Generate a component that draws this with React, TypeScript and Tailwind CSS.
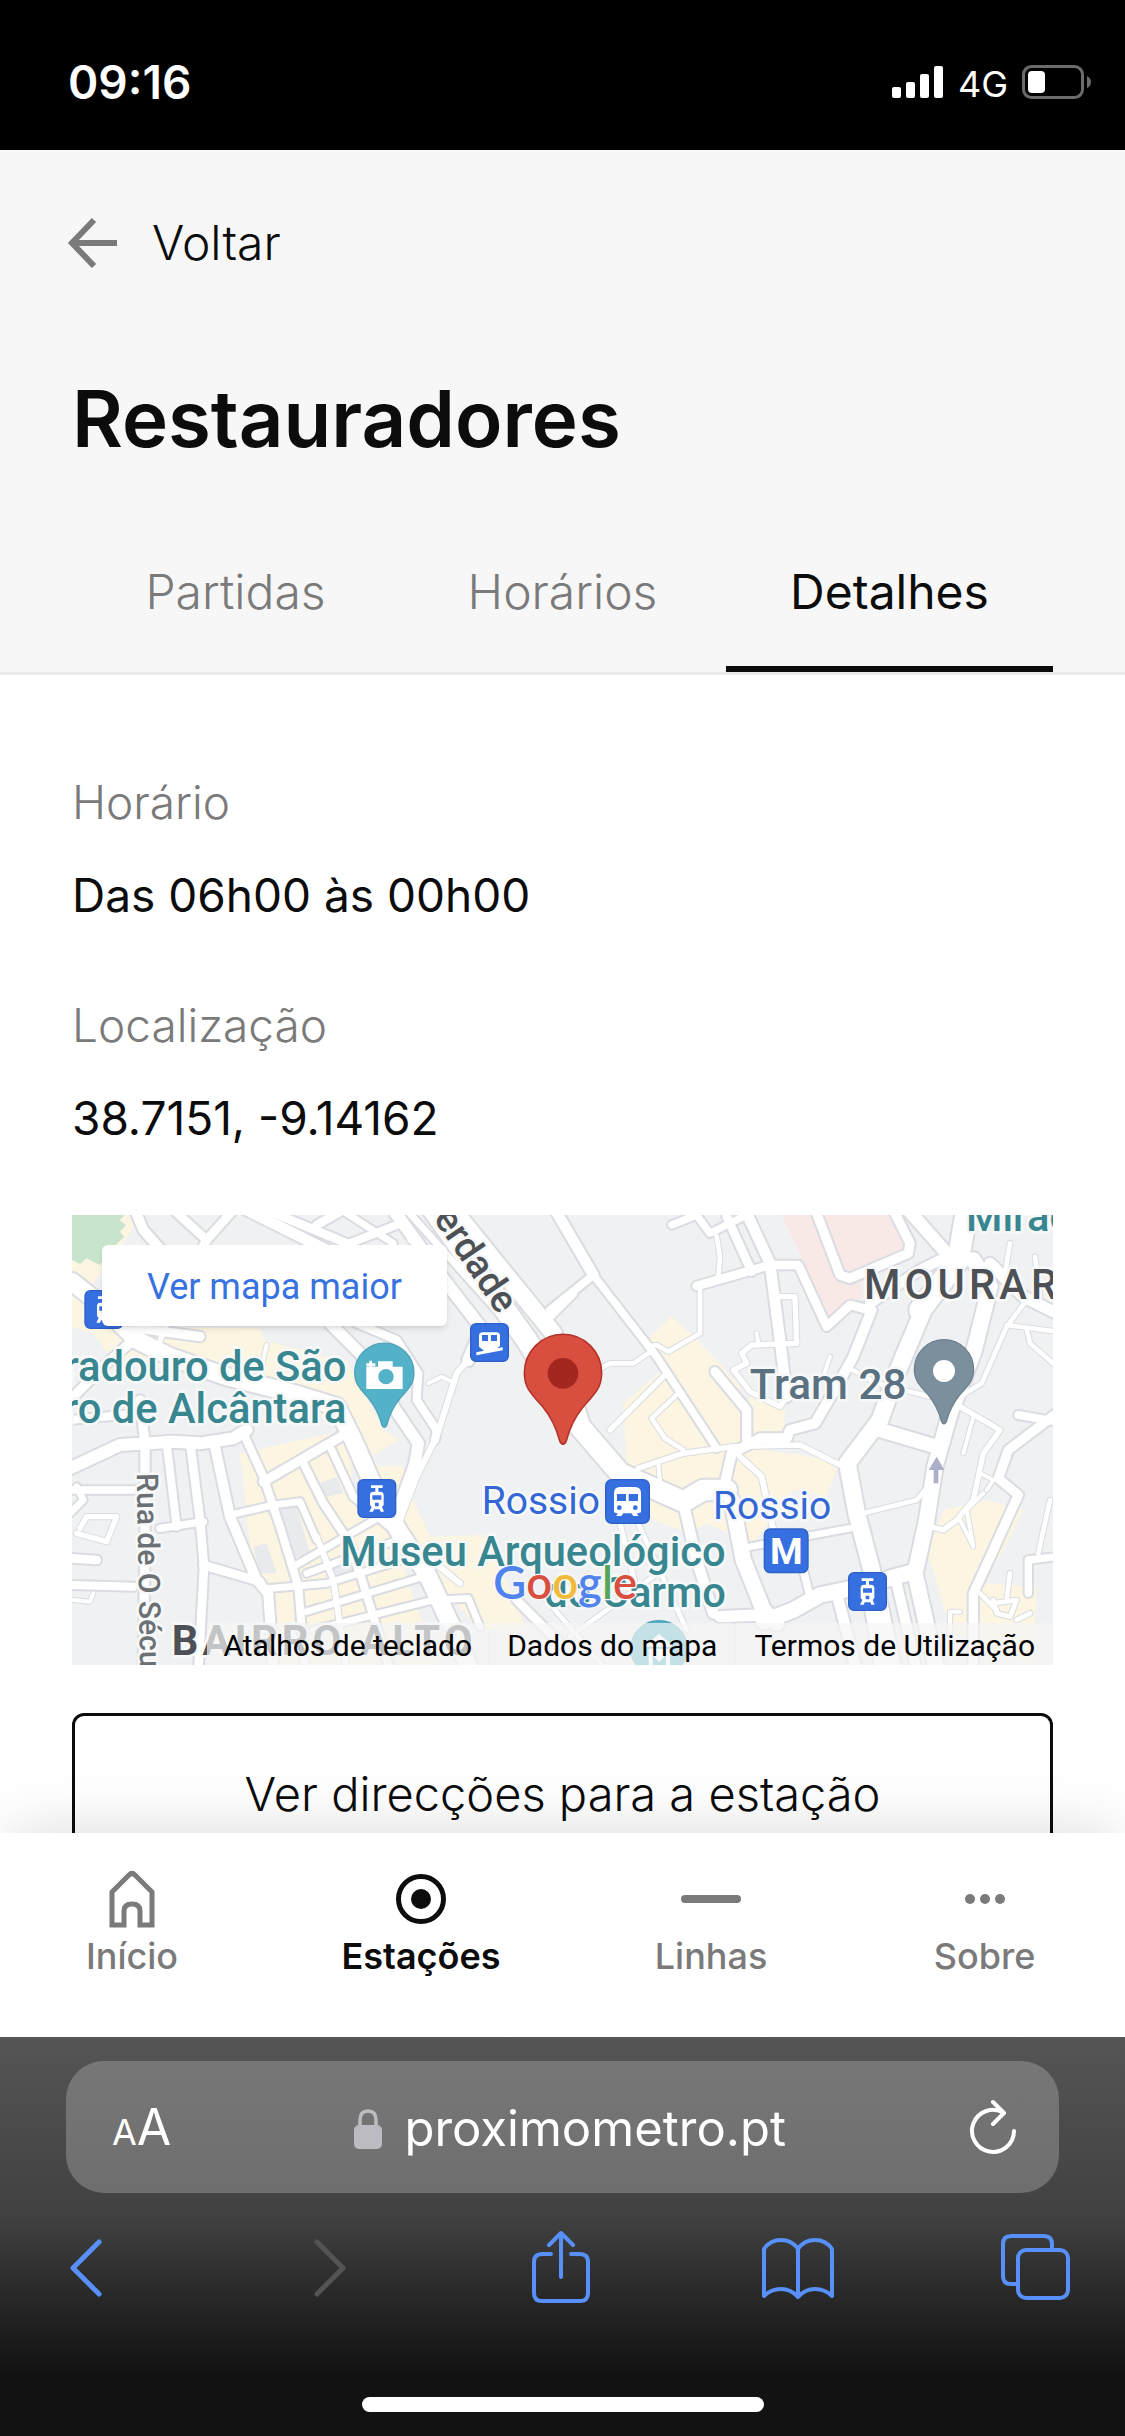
import React from 'react';

type Road = [string, number];

// Map geometry is kept in two tiles of 1500 units, drawn side by side
const westRoads: Road[] = [
  ['M225 30 L250 90 L330 180', 30],
  ['M330 20 L440 120 L520 30', 26],
  ['M440 120 L410 170', 26],
  ['M540 20 L800 150', 32],
  ['M620 30 L860 130', 26],
  ['M770 75 L850 30', 26],
  ['M870 130 L1010 75', 24],
  ['M860 40 L1000 130', 20],
  ['M1000 30 L1160 250 L1265 385 L1225 480', 36],
  ['M1040 30 L1390 420', 20],
  ['M1120 30 L1400 420 L1560 680', 62],
  ['M1180 30 L1480 400', 50],
  ['M1450 370 L1540 280', 24],
  ['M1050 120 L1120 170', 16],
  ['M810 370 L980 540 L1000 620 L1075 730 L1065 790 L1015 930', 34],
  ['M890 370 L1010 420 L1075 520 L1070 600 L1130 690 L1125 720', 24],
  ['M1225 480 L1190 520 L1130 710 L1070 830 L1020 960', 18],
  ['M1105 550 L1145 530 L1175 545', 12],
  ['M36 245 L130 320 L230 420 L330 470 L500 530 L700 580 L830 620 L880 720 L950 880 L1020 1000 L1100 1120 L1180 1290 L1230 1410', 52],
  ['M240 385 L420 410', 28],
  ['M320 370 L290 450', 16],
  ['M620 435 L600 520', 12],
  ['M230 410 L130 500 L30 600', 28],
  ['M30 660 L240 640', 24],
  ['M30 805 L180 735 L340 725 L420 730 L520 715 L560 690', 36],
  ['M240 600 L255 730 L255 1000 L250 1410', 28],
  ['M30 870 L230 870', 22],
  ['M30 940 L70 900 L50 860', 20],
  ['M30 1155 L220 1160', 24],
  ['M60 985 L80 950 L170 950 L140 1025 L50 1000', 16],
  ['M30 1075 L110 1080', 26],
  ['M100 1180 L90 1205 L40 1200', 12],
  ['M320 730 L350 980', 24],
  ['M300 985 L430 965', 22],
  ['M392 740 L420 960 L432 1100 L415 1410', 26],
  ['M465 740 L510 950 L590 1140 L625 1180 L640 1410', 30],
  ['M550 700 L610 830 L660 980 L715 1160 L735 1410', 24],
  ['M610 845 L860 700', 28],
  ['M430 1095 L600 1145', 26],
  ['M510 945 L640 915 L720 905 L770 1020', 20],
  ['M730 790 L790 910 L850 1000 L900 1120 L990 1410', 24],
  ['M815 750 L880 890 L1000 990', 22],
  ['M770 1010 L820 1140 L860 1410', 18],
  ['M700 1100 L960 950', 20],
  ['M740 1120 L1040 1010', 20],
  ['M630 1165 L800 1150 L1060 1070', 20],
  ['M740 1235 L1090 1130', 20],
  ['M760 1290 L1120 1200 L1225 1195 L1260 1280', 20],
  ['M1090 1060 L1200 1150', 18],
  ['M1370 1200 L1500 1330', 26],
];

const eastRoads: Road[] = [
  ['M-20 20 L100 225', 32],
  ['M100 225 L-30 330', 24],
  ['M100 225 L290 470 L470 745', 22],
  ['M335 75 L410 45 L450 100 L570 40', 22],
  ['M470 110 L480 170 L475 230', 14],
  ['M500 50 L575 215', 26],
  ['M560 40 L630 190 L660 420 L680 590', 32],
  ['M410 258 L630 195 L715 195 L800 380 L870 315 L930 330', 26],
  ['M420 260 L420 400 L325 455 L290 435 L260 440', 14],
  ['M770 40 L840 225 L870 235 L1045 160 L1050 130 L1005 40', 28],
  ['M1045 30 L1160 160', 38],
  ['M1200 150 L1080 210 L930 310', 30],
  ['M1220 30 L1195 180 L1080 330', 64],
  ['M1200 180 L1090 330 L1010 520 L960 660 L862 790 L890 940 L935 1110 L1000 1410', 50],
  ['M1240 180 L1290 260 L1240 460 L1170 640 L1125 800 L1100 960 L1065 1120 L1130 1410', 46],
  ['M960 690 L1130 740', 42],
  ['M935 330 L880 470 L830 560 L765 670 L690 690 L680 715 L600 715 L515 760 L490 870', 30],
  ['M465 515 L560 630 L560 720', 28],
  ['M680 590 L660 620 L570 575 L520 510 L560 490 L545 460 L575 435 L710 430 L705 290 L660 290', 16],
  ['M590 400 L595 430', 12],
  ['M810 470 L790 530', 12],
  ['M860 500 L950 550 L1110 590', 14],
  ['M30 590 L60 680 L180 820 L370 905 L430 870 L500 870', 62],
  ['M320 520 L150 690', 16],
  ['M120 505 L150 490 L220 490 L280 450', 14],
  ['M360 575 L275 655 L315 715 L370 750', 14],
  ['M235 805 L370 760 L520 740 L720 735 L840 795', 16],
  ['M295 790 L300 850', 12],
  ['M540 770 L605 830 L640 990', 18],
  ['M370 910 L410 1080 L460 1240', 32],
  ['M515 900 L550 1080 L610 1230 L650 1270', 46],
  ['M480 1250 L600 1245', 34],
  ['M610 1265 L700 1230 L780 1185 L900 1160 L1060 1115', 46],
  ['M570 1040 L870 985', 20],
  ['M730 1110 L750 1190', 22],
  ['M910 940 L1070 900 L1095 870', 14],
  ['M180 970 L230 1170', 16],
  ['M230 960 L380 1290', 14],
  ['M30 1310 L280 1130', 14],
  ['M-40 1200 L130 1400', 14],
  ['M830 1180 L890 1410', 32],
  ['M920 1180 L960 1410', 26],
  ['M1010 1150 L1070 1410', 30],
  ['M1200 620 L1320 690 L1270 760 L1240 900 L1190 960 L1150 990 L1110 980', 16],
  ['M1240 650 L1210 760', 12],
  ['M1260 820 L1300 840 L1280 870', 12],
  ['M1200 960 L1240 1040 L1220 930 L1270 880', 12],
  ['M1490 640 L1345 750 L1315 835 L1375 885 L1300 1050 L1240 1180 L1240 1410', 28],
  ['M1375 645 L1490 665', 24],
  ['M1490 340 L1390 290 L1290 190', 34],
  ['M1400 300 L1340 380 L1265 550 L1200 590', 14],
  ['M1340 375 L1490 395', 14],
  ['M1400 385 L1410 430 L1490 500', 14],
  ['M1350 130 L1335 220', 14],
  ['M1425 170 L1440 290', 14],
  ['M1405 1180 L1405 1080 L1490 1070', 22],
  ['M1470 900 L1435 1060', 14],
  ['M1170 1300 L1170 1235 L1200 1235', 12],
  ['M1300 1210 L1370 1200 L1350 1250 L1310 1240 L1300 1200 M1260 1180 L1310 1230 M1350 1120 L1340 1200 M1370 1260 L1410 1240', 14],
];

const labelHalo = {
  stroke: '#f7f8f8',
  strokeWidth: 16,
  strokeLinejoin: 'round' as const,
  paintOrder: 'stroke',
};

const Roads = ({ roads, casing }: { roads: Road[]; casing?: boolean }) => (
  <g fill="none" strokeLinejoin="round" strokeLinecap="round" stroke={casing ? '#dadce2' : '#ffffff'}>
    {roads.map(([d, width]) => (
      <path key={d} d={d} strokeWidth={casing ? width + (width > 18 ? 12 : 6) : width} />
    ))}
  </g>
);

const Pin = ({ x, y, r, fill, edge }: { x: number; y: number; r: number; fill: string; edge: string }) => (
  <path
    transform={`translate(${x} ${y}) scale(${r / 100})`}
    d="M0 184 Q-6 184 -9 174 C-18 140 -30 115 -52 88 C-82 54 -100 38 -100 0 A100 100 0 0 1 100 0 C100 38 82 54 52 88 C30 115 18 140 9 174 Q6 184 0 184Z"
    fill={fill}
    stroke={edge}
    strokeWidth="4"
  />
);

const TramIcon = ({ x, y }: { x: number; y: number }) => (
  <g transform={`translate(${x} ${y})`}>
    <rect x="2" y="2" width="113" height="113" rx="16" fill="#3670e0" stroke="#2d60c6" strokeWidth="4" />
    <path d="M41 19 H76 V27 H63 V38 H68 Q79 38 79 48 V78 L74 84 L80 98 H70 L67 91 H50 L47 98 H36 L43 84 L38 78 V48 Q38 38 49 38 H54 V27 H41Z" fill="#fff" />
    <path d="M45 49 H72 V62 H45Z M53 71 H64 V82 H53Z" fill="#3670e0" />
  </g>
);

const StationMap = () => (
  <svg
    className="absolute inset-0 h-full w-full font-[Roboto,sans-serif]"
    viewBox="0 0 2943 1350"
    preserveAspectRatio="xMidYMid slice"
    aria-label="Mapa da estação"
  >
    <rect width="2943" height="1350" fill="#f0f1f3" />
    <g transform="translate(-36 -45)">
      <path d="M36 180 L150 130 L170 30 L225 30 L220 80 L180 150 L90 260 L36 220Z M36 290 L200 380 L600 385 L610 420 L830 480 L860 480 L970 690 L1020 720 L930 770 L960 800 L1025 795 L1060 900 L1110 1010 L1270 1005 L1320 1100 L1400 1290 L1260 1290 L1000 1000 L870 680 L560 560 L150 470 L100 400 L36 380Z" fill="#fcf5e1" />
      <path d="M540 760 L860 690 L880 860 L1010 1040 L1130 1395 L630 1395 L620 1170 L570 1040Z" fill="#fcf5e1" />
      <path d="M620 930 L710 920 L750 1060 L690 1080Z M780 850 L830 830 L850 880 L800 890Z M790 1100 L870 1080 L880 1120 L800 1140Z M580 1040 L620 1030 L650 1120 L600 1120Z" fill="#e8eaed" />
      <path d="M36 45 H195 L178 60 L198 75 L180 95 L193 110 L160 140 L120 195 L80 175 L60 192 L36 180Z" fill="#c8e4cd" />
    </g>
    <g transform="translate(1464 -45)">
      <path d="M265 415 L335 350 L390 400 L480 490 L540 560 L550 740 L820 780 L830 810 L800 890 L700 870 L580 1030 L440 970 L390 1000 L280 960 L250 900 L380 900 L200 800 L190 610 L310 510Z M570 590 L675 630 L670 700 L560 700Z M1150 930 L1280 900 L1390 930 L1330 1050 L1270 1150 L1430 1160 L1420 1395 L1170 1290 L1120 1110 L1100 1060Z" fill="#fcf5e1" />
      <path d="M665 45 H1015 L1040 150 L900 250 L910 290 L800 350 L720 160Z" fill="#f8e8e6" />
    </g>
    <g transform="translate(-36 -45)"><Roads roads={westRoads} casing /></g>
    <g transform="translate(1464 -45)"><Roads roads={eastRoads} casing /></g>
    <g transform="translate(-36 -45)"><Roads roads={westRoads} /></g>
    <g transform="translate(1464 -45)"><Roads roads={eastRoads} /></g>

    {/* Place names */}
    <g transform="translate(-36 -45)" fontWeight="500">
      <text transform="translate(1315 346) rotate(56)" textAnchor="end" fontSize="114" fill="#4d5156" {...labelHalo}>Liberdade</text>
      <text transform="translate(230 820) rotate(89)" fontSize="90" fill="#6b7075" {...labelHalo}>Rua de O Século</text>
      <text x="335" y="1366" fontSize="125" fontWeight="700" className="tracking-widest" fill="#4d5156" {...labelHalo}>BAIRRO ALTO</text>
      <g fontSize="125" fill="#388790" {...labelHalo}>
        <text x="859" y="543" textAnchor="end">Miradouro de São</text>
        <text x="859" y="668" textAnchor="end">Pedro de Alcântara</text>
        <text x="1419" y="1097" textAnchor="middle">Museu Arqueológico</text>
        <text x="1998" y="1222" textAnchor="end">do Carmo</text>
        <text x="2718" y="94">Miradouro</text>
      </g>
      <g fontSize="117" fontWeight="400" fill="#3367d6" {...labelHalo}>
        <text x="1265" y="943">Rossio</text>
        <text x="1959" y="957">Rossio</text>
      </g>
      <text x="2069" y="597" fontSize="127" fill="#5a7181" {...labelHalo}>Tram 28</text>
      <text x="2412" y="296" fontSize="125" className="tracking-widest" fill="#4d5156" {...labelHalo}>MOURARIA</text>
    </g>

    {/* Transport stops */}
    <g transform="translate(-36 -45)">
      <TramIcon x={73} y={270} />
      <TramIcon x={892} y={837} />
      <TramIcon x={2364} y={1116} />
      <rect x="1232" y="371" width="113" height="113" rx="16" fill="#3670e0" stroke="#2d60c6" strokeWidth="4" />
      <path d="M1268 397 H1309 Q1320 397 1320 408 V437 L1312 445 L1328 442 V451 L1249 466 V457 L1272 452 L1257 440 V408 Q1257 397 1268 397Z" fill="#fff" />
      <path d="M1266 405 H1284 V423 H1266Z M1293 405 H1311 V423 H1293Z" fill="#3670e0" />
      <rect x="1637" y="839" width="131" height="131" rx="18" fill="#3670e0" stroke="#2d60c6" strokeWidth="4" />
      <path d="M1680 861 H1725 Q1743 861 1743 880 V937 L1730 941 L1736 948 H1720 L1714 940 H1690 L1684 948 H1668 L1674 941 L1662 937 V880 Q1662 861 1680 861Z" fill="#fff" />
      <path d="M1671 882 H1698 V903 H1671Z M1706 882 H1734 V903 H1706Z" fill="#3670e0" />
      <circle cx="1678" cy="923" r="7" fill="#3670e0" />
      <circle cx="1726" cy="923" r="7" fill="#3670e0" />
      <rect x="2113" y="987" width="131" height="131" rx="18" fill="#3670e0" stroke="#2d60c6" strokeWidth="4" />
      <text x="2179" y="1092" textAnchor="middle" fontSize="112" fontWeight="700" fill="#fff">M</text>
      <path d="M2630 770 L2606 810 H2621 V850 H2635 V810 H2653Z" fill="#abb0c8" />

      <Pin x={973} y={518} r={89} fill="#53b1c8" edge="#4a9fb4" />
      <path d="M919 500 H954 V484 H998 V500 H1028 V567 H919Z M928 482 H936 V490 H946 V499 H936 V509 H928 V499 H919 V490 H928Z" fill="#fff" />
      <circle cx="978" cy="530" r="23" fill="#53b1c8" />
      <Pin x={2652} y={508} r={89} fill="#7c8f9c" edge="#687f8c" />
      <circle cx="2652" cy="513" r="33" fill="#fff" />
      <Pin x={1509} y={519} r={116} fill="#d84f3f" edge="#b53228" />
      <circle cx="1509" cy="520" r="46" fill="#a3261f" />
      <Pin x={1797} y={1347} r={85} fill="#53b1c8" edge="#4a9fb4" />
      <path d="M1758 1334 L1797 1302 L1836 1334 V1340 H1758Z M1766 1346 H1830 V1400 H1818 V1364 L1798 1386 L1778 1364 V1400 H1766Z" fill="#fff" />

      <text x="1300" y="1198" fontFamily="Lato, sans-serif" fontSize="136" fontWeight="600" {...labelHalo} strokeWidth="8">
        <tspan fill="#5083ee">G</tspan>
        <tspan fill="#d84f3f">o</tspan>
        <tspan fill="#f1ba3b">o</tspan>
        <tspan fill="#5083ee">g</tspan>
        <tspan fill="#54a55b">l</tspan>
        <tspan fill="#d84f3f">e</tspan>
      </text>
    </g>
  </svg>
);

const StatusBar = () => (
  <div className="flex h-[150px] shrink-0 items-center justify-between bg-black pt-[14px] pr-[33px] pl-[68px] text-white">
    <span className="text-[46px] leading-none font-semibold">09:16</span>
    <div className="flex items-center gap-[14px]">
      <svg width="52" height="34" viewBox="0 0 52 34" fill="#fff" aria-hidden="true">
        <rect x="0" y="22" width="9" height="11" rx="2" />
        <rect x="14" y="17" width="9" height="16" rx="2" />
        <rect x="28" y="9" width="9" height="24" rx="2" />
        <rect x="42" y="1" width="9" height="32" rx="2" />
      </svg>
      <span className="pt-1 text-[36px] leading-none">4G</span>
      <svg width="70" height="34" viewBox="0 0 70 34" aria-hidden="true">
        <rect x="1.5" y="1.5" width="59" height="31" rx="8" fill="none" stroke="#6b6b6b" strokeWidth="3" />
        <rect x="6" y="6" width="17" height="22" rx="4" fill="#fff" />
        <path d="M65 11 Q69 13 69 17 T65 23Z" fill="#6b6b6b" />
      </svg>
    </div>
  </div>
);

const tabs = ['Partidas', 'Horários', 'Detalhes'];

const StationHeader = () => (
  <header className="shrink-0 border-b-[3px] border-[#eaeaea] bg-[#f7f7f7] px-[72px] pt-[57px]">
    <a href="#voltar" className="flex h-[72px] items-center gap-8 text-[48px] leading-[72px] font-light">
      <svg width="48" height="50" viewBox="0 0 48 50" fill="none" stroke="#7a7a7a" strokeWidth="6" className="overflow-visible" aria-hidden="true">
        <path d="M22 2 L0 25 L22 48 M0 25 H45" />
      </svg>
      Voltar
    </a>
    <h1 className="mt-[90px] text-[78px] leading-[100px] font-semibold">Restauradores</h1>
    <nav className="mt-[51px] grid grid-cols-3">
      {tabs.map((tab) => (
        <a
          key={tab}
          href={`#${tab.toLowerCase()}`}
          className={
            tab === 'Detalhes'
              ? 'border-b-6 border-[#0c0c0c] pt-9 pb-[38px] text-center text-[48px] leading-[72px]'
              : 'border-b-6 border-transparent pt-9 pb-[38px] text-center text-[48px] leading-[72px] font-light text-[#7a7a7a]'
          }
        >
          {tab}
        </a>
      ))}
    </nav>
  </header>
);

const details = [
  { label: 'Horário', value: 'Das 06h00 às 00h00' },
  { label: 'Localização', value: '38.7151, -9.14162' },
];

const StationDetails = () => (
  <main className="min-h-0 flex-1 overflow-hidden px-[72px] pt-[91px]">
    <dl>
      {details.map((item) => (
        <div key={item.label} className="mb-[58px] text-[46px] leading-[72px]">
          <dt className="mb-[21px] font-light text-[#7a7a7a]">{item.label}</dt>
          <dd>{item.value}</dd>
        </div>
      ))}
    </dl>

    <div className="relative mt-[61px] h-[450px] overflow-hidden font-[Roboto,sans-serif]">
      <StationMap />
      <a href="#mapa" className="absolute top-[30px] left-[30px] rounded-md bg-white px-[45px] pt-[3px] text-[36px] leading-[78px] text-[#3872e0] shadow-md">
        Ver mapa maior
      </a>
      <div className="absolute right-0 bottom-0 flex gap-[3px] text-[30px] leading-[38px] text-black">
        <button className="bg-[#f5f5f5]/70 px-4 pt-1">Atalhos de teclado</button>
        <button className="bg-[#f5f5f5]/70 px-4 pt-1">Dados do mapa</button>
        <a href="#termos" className="bg-[#f5f5f5]/70 px-[18px] pt-1">Termos de Utilização</a>
      </div>
    </div>

    <button className="mt-12 w-full rounded-xl border-[3px] border-[#0c0c0c] py-[42px] text-[47px] leading-[72px] font-light">
      Ver direcções para a estação
    </button>
  </main>
);

const BottomNav = () => (
  <nav className="relative grid h-[204px] shrink-0 grid-cols-[264fr_314fr_266fr_281fr] items-start bg-white pt-9 text-[36px] leading-[54px] font-medium text-[#7a7a7a] shadow-[0_-8px_60px_-10px_rgba(0,0,0,0.16)]">
    <a href="#inicio" className="flex flex-col items-center">
      <svg width="60" height="60" viewBox="0 0 60 60" fill="none" stroke="currentColor" strokeWidth="5" aria-hidden="true">
        <path d="M10 23 L27 6 Q30 3 33 6 L50 23 V56 H38 V42 Q38 35 30 35 T22 42 V56 H10Z" />
      </svg>
      Início
    </a>
    <a href="#estacoes" className="flex flex-col items-center font-semibold text-[#0c0c0c]">
      <svg width="60" height="60" viewBox="0 0 60 60" fill="none" stroke="currentColor" strokeWidth="5" aria-hidden="true">
        <circle cx="30" cy="30" r="22.5" />
        <circle cx="30" cy="30" r="10" fill="currentColor" stroke="none" />
      </svg>
      Estações
    </a>
    <a href="#linhas" className="flex flex-col items-center">
      <svg width="60" height="60" viewBox="0 0 60 60" fill="currentColor" aria-hidden="true">
        <rect x="0" y="26" width="60" height="8" rx="4" />
      </svg>
      Linhas
    </a>
    <a href="#sobre" className="flex flex-col items-center">
      <svg width="60" height="60" viewBox="0 0 60 60" fill="currentColor" aria-hidden="true">
        <circle cx="15" cy="30" r="5" />
        <circle cx="30" cy="30" r="5" />
        <circle cx="45" cy="30" r="5" />
      </svg>
      Sobre
    </a>
  </nav>
);

const BrowserBar = () => (
  <footer className="relative flex shrink-0 flex-col bg-linear-to-b from-[#555555] via-[#414141] via-45% to-[#121212] to-85% pt-6 pb-6">
    <div className="mx-[66px] flex h-[132px] items-center justify-between rounded-[38px] bg-linear-to-b from-[#777777] to-[#6e6e6e] pr-[42px] pl-[46px] text-white">
      <button className="flex items-baseline" aria-label="Opções de página">
        <span className="text-[36px] leading-none">A</span>
        <span className="text-[50px] leading-none">A</span>
      </button>
      <div className="flex items-center gap-[22px] pt-1 text-[49px] leading-[60px]">
        <svg width="28" height="40" viewBox="0 0 28 40" aria-hidden="true">
          <path d="M6 19 V11 Q6 2 14 2 T22 11 V19" fill="none" stroke="#bcbbc1" strokeWidth="3.5" />
          <rect x="0" y="16" width="28" height="24" rx="5" fill="#bcbbc1" />
        </svg>
        proximometro.pt
      </div>
      <button aria-label="Recarregar">
        <svg width="48" height="56" viewBox="0 0 48 56" fill="none" stroke="#fff" strokeWidth="4" strokeLinecap="round" strokeLinejoin="round" aria-hidden="true">
          <path d="M45 32 A21 21 0 1 1 35 14 M24 3 L35 14 L24 25" />
        </svg>
      </button>
    </div>

    <div className="mt-[30px] flex h-[88px] items-center justify-between pr-[53px] pl-[49px] text-[#5690f8]">
      <button className="flex w-[74px] justify-center" aria-label="Retroceder">
        <svg width="60" height="60" viewBox="0 0 60 60" fill="none" stroke="currentColor" strokeWidth="5" strokeLinecap="round" strokeLinejoin="round">
          <path d="M43 5 L17 31 L43 57" />
        </svg>
      </button>
      <button className="flex w-[74px] justify-center text-[#545454]" aria-label="Avançar">
        <svg width="60" height="60" viewBox="0 0 60 60" fill="none" stroke="currentColor" strokeWidth="5" strokeLinecap="round" strokeLinejoin="round">
          <path d="M24 5 L50 31 L24 57" />
        </svg>
      </button>
      <button className="flex w-[74px] justify-center" aria-label="Partilhar">
        <svg width="60" height="76" viewBox="0 0 60 76" fill="none" stroke="currentColor" strokeWidth="4" strokeLinecap="round" strokeLinejoin="round">
          <path d="M20 25 H11 Q3 25 3 33 V64 Q3 72 11 72 H49 Q57 72 57 64 V33 Q57 25 49 25 H40 M30 48 V4 M18 16 L30 4 L42 16" />
        </svg>
      </button>
      <button className="flex w-[74px] justify-center" aria-label="Favoritos">
        <svg width="74" height="64" viewBox="0 0 74 64" fill="none" stroke="currentColor" strokeWidth="4" strokeLinecap="round" strokeLinejoin="round">
          <path d="M37 14 Q31 5 20 5 T3 14 V61 Q10 54 20 54 T37 62 Q44 54 54 54 T71 61 V14 Q65 5 54 5 T37 14 V62" />
        </svg>
      </button>
      <button className="flex w-[74px] justify-center" aria-label="Separadores">
        <svg width="72" height="70" viewBox="0 0 72 70" fill="none" stroke="currentColor" strokeWidth="4" strokeLinejoin="round">
          <rect x="19" y="18" width="50" height="48" rx="8" />
          <path d="M19 52 H12 Q4 52 4 44 V12 Q4 4 12 4 H45 Q53 4 53 12 V18" />
        </svg>
      </button>
    </div>

    <div className="mt-[86px] h-[15px] w-[402px] self-center rounded-full bg-white" />
  </footer>
);

const App = () => {
  return (
    <div className="flex h-screen flex-col overflow-hidden bg-white font-[Inter,sans-serif] text-[#0c0c0c]">
      <StatusBar />
      <StationHeader />
      <StationDetails />
      <BottomNav />
      <BrowserBar />
    </div>
  );
};

export default App;
